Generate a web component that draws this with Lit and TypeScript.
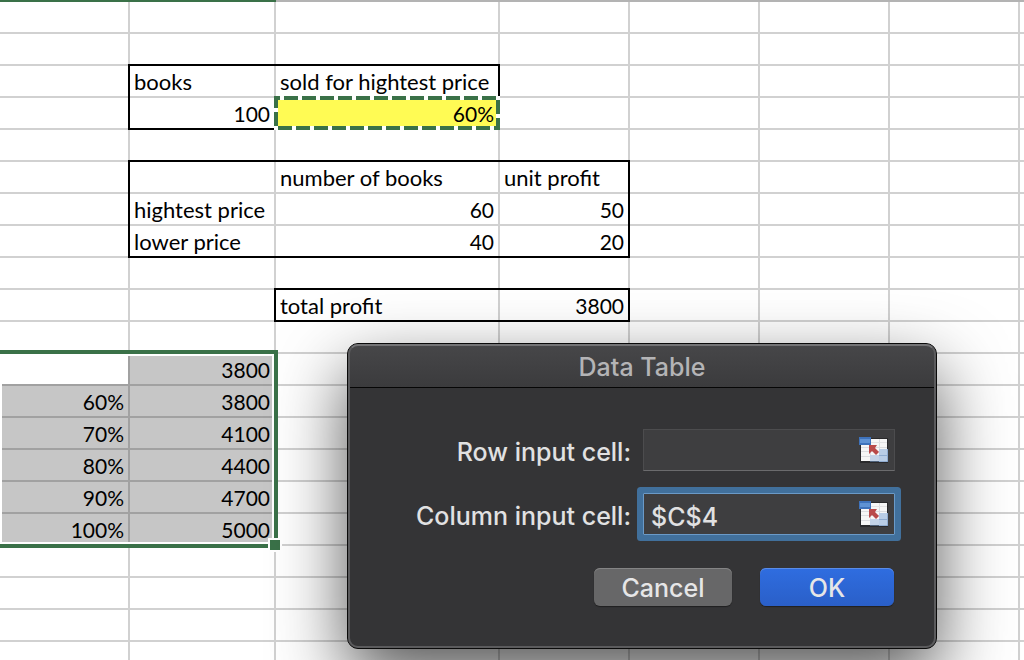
import { LitElement, html, css, svg } from "lit";
import { customElement, property } from "lit/decorators.js";
import { classMap } from "lit/directives/class-map.js";

interface Cell {
  text?: string;
  num?: boolean;
  edge?: string;
  fill?: "yellow" | "shade" | "active";
}

const COLUMNS = 8;
const ROWS = 21;

/* Keys are "row:column". Edge letters: r = right, b = bottom, c = corner. */
const CELLS: Record<string, Cell> = {
  "1:0": { edge: "c" },
  "1:1": { edge: "b" },
  "1:2": { edge: "b" },
  "2:0": { edge: "r" },
  "2:1": { text: "books" },
  "2:2": { text: "sold for hightest price", edge: "r" },
  "3:0": { edge: "r" },
  "3:1": { text: "100", num: true, edge: "b" },
  "3:2": { text: "60%", num: true, edge: "rb", fill: "yellow" },
  "4:0": { edge: "c" },
  "4:1": { edge: "b" },
  "4:2": { edge: "b" },
  "4:3": { edge: "b" },
  "5:0": { edge: "r" },
  "5:2": { text: "number of books" },
  "5:3": { text: "unit profit", edge: "r" },
  "6:0": { edge: "r" },
  "6:1": { text: "hightest price" },
  "6:2": { text: "60", num: true },
  "6:3": { text: "50", num: true, edge: "r" },
  "7:0": { edge: "r" },
  "7:1": { text: "lower price", edge: "b" },
  "7:2": { text: "40", num: true, edge: "b" },
  "7:3": { text: "20", num: true, edge: "rb" },
  "8:1": { edge: "c" },
  "8:2": { edge: "b" },
  "8:3": { edge: "b" },
  "9:1": { edge: "r" },
  "9:2": { text: "total profit", edge: "b" },
  "9:3": { text: "3800", num: true, edge: "rb" },
  "11:0": { fill: "active" },
  "11:1": { text: "3800", num: true, fill: "shade" },
  "12:0": { text: "60%", num: true, fill: "shade" },
  "12:1": { text: "3800", num: true, fill: "shade" },
  "13:0": { text: "70%", num: true, fill: "shade" },
  "13:1": { text: "4100", num: true, fill: "shade" },
  "14:0": { text: "80%", num: true, fill: "shade" },
  "14:1": { text: "4400", num: true, fill: "shade" },
  "15:0": { text: "90%", num: true, fill: "shade" },
  "15:1": { text: "4700", num: true, fill: "shade" },
  "16:0": { text: "100%", num: true, fill: "shade" },
  "16:1": { text: "5000", num: true, fill: "shade" },
};

@customElement("sheet-grid")
export class SheetGrid extends LitElement {
  static styles = css`
    :host {
      display: block;
      position: relative;
      font-family: Lato, "Open Sans", sans-serif;
      font-size: 22px;
      color: #000;
    }
    .sheet {
      width: 100%;
      table-layout: fixed;
      border-collapse: separate;
      border-spacing: 0;
      border-top: 2px solid #b3b3b3;
    }
    .col-a, .col-d { width: 130px; }
    .col-b { width: 146px; }
    .col-c { width: 224px; }
    .cell {
      --line: #d1d1d1;
      --right: var(--line);
      --bottom: var(--line);
      --corner: var(--line);
      height: 32px;
      box-sizing: border-box;
      padding: 1px 6px 1px 4px;
      line-height: 30px;
      white-space: nowrap;
      text-align: left;
      background:
        linear-gradient(var(--corner), var(--corner)) right bottom / 2px 2px no-repeat,
        linear-gradient(var(--bottom), var(--bottom)) left bottom / 100% 2px no-repeat,
        linear-gradient(var(--right), var(--right)) right top / 2px 100% no-repeat,
        var(--fill, #fff);
    }
    .cell:last-child { --right: transparent; }
    .num {
      font-size: 21px;
      text-align: right;
    }
    .edge-right { --right: #000; --corner: #000; }
    .edge-bottom { --bottom: #000; --corner: #000; }
    .edge-corner { --corner: #000; }
    .yellow { --fill: #fffb54; }
    .shade { --fill: #c6c6c6; --line: #a1a1a1; }
    .active { --line: #a1a1a1; }
    .previous {
      position: absolute;
      top: 0;
      left: 0;
      width: 276px;
      height: 2px;
      background: #3a7148;
    }
    .ants {
      position: absolute;
      top: 96px;
      left: 274px;
      display: block;
    }
    .selection {
      position: absolute;
      top: 350px;
      left: -4px;
      width: 282px;
      height: 198px;
      box-sizing: border-box;
      border: 4px solid #3a7148;
      box-shadow: inset 0 0 0 2px #fff;
    }
    .handle {
      position: absolute;
      right: -8px;
      bottom: -8px;
      width: 10px;
      height: 10px;
      border: 2px solid #fff;
      background: #3a7148;
    }
  `;

  private renderCell(row: number, col: number) {
    const cell = CELLS[`${row}:${col}`] ?? {};
    const edge = cell.edge ?? "";
    const classes = {
      cell: true,
      num: !!cell.num,
      "edge-right": edge.includes("r"),
      "edge-bottom": edge.includes("b"),
      "edge-corner": edge.includes("c"),
      yellow: cell.fill === "yellow",
      shade: cell.fill === "shade",
      active: cell.fill === "active",
    };
    return html`<td class=${classMap(classes)}>${cell.text ?? ""}</td>`;
  }

  render() {
    const rows = Array.from({ length: ROWS }, (_, r) => r);
    const cols = Array.from({ length: COLUMNS }, (_, c) => c);
    return html`
      <table class="sheet">
        <colgroup>
          <col class="col-a" /><col class="col-b" /><col class="col-c" />
          <col class="col-d" /><col class="col-d" /><col class="col-d" /><col class="col-d" />
          <col />
        </colgroup>
        <tbody>
          ${rows.map((r) => html`<tr>${cols.map((c) => this.renderCell(r, c))}</tr>`)}
        </tbody>
      </table>
      <div class="previous"></div>
      <svg class="ants" width="226" height="34" viewBox="0 0 226 34" fill="none" stroke-width="4" aria-hidden="true">
        <rect x="2" y="2" width="222" height="30" stroke="#fff" />
        <rect x="2" y="2" width="222" height="30" stroke="#3a7148" stroke-dasharray="14 4" stroke-dashoffset="10" />
      </svg>
      <div class="selection"><div class="handle"></div></div>
    `;
  }
}

const pickerIcon = svg`
  <rect x="1" y="1" width="28" height="25" fill="#29292b" />
  <rect x="2" y="2" width="26" height="22" fill="#f6f6f6" />
  <path d="M2 10.500h26M2 14.500h26M2 19.500h26M11.500 2v22M20.500 2v22" stroke="#dcdde0" fill="none" />
  <path d="M12 5.500h16" stroke="#e3e3e5" fill="none" />
  <rect x="11" y="18" width="9" height="6" fill="#c3d3e8" />
  <rect x="20" y="12" width="9" height="13" fill="#b9cde6" />
  <path d="M20 18.500h8M11 24.500h18M28.500 12v13" stroke="#6f92bd" stroke-opacity=".55" fill="none" />
  <rect x="0" y="0" width="12" height="8" fill="#3e72bb" />
  <rect x="1" y="2" width="10" height="4" fill="#5f92d3" />
  <path d="M10 8h8l-2 3 4 4-3 3-4-4-3 3z" fill="#b94a4a" />
`;

@customElement("range-field")
export class RangeField extends LitElement {
  @property() label = "";
  @property() value = "";
  @property({ type: Boolean }) current = false;

  static styles = css`
    :host {
      display: grid;
      grid-template-columns: 1fr 252px;
      column-gap: 12px;
      align-items: center;
    }
    .label {
      padding-top: 4px;
      text-align: right;
      line-height: 38px;
      white-space: nowrap;
    }
    .box {
      display: flex;
      align-items: center;
      height: 42px;
      box-sizing: border-box;
      padding-right: 5px;
      border: 1px solid #4c4c4e;
      border-bottom-color: #6b6b6d;
      background: #3e3e40;
    }
    .box.current {
      border-color: #6a9ac8;
      box-shadow: 0 0 0 6px #41709c;
      border-radius: 1px;
    }
    .input {
      flex: 1;
      min-width: 0;
      height: 100%;
      box-sizing: border-box;
      padding: 6px 8px 0 7px;
      border: 0;
      outline: 0;
      background: none;
      color: inherit;
      font: inherit;
    }
    .pick {
      width: 30px;
      height: 26px;
      padding: 0;
      border: 0;
      background: none;
    }
    .glyph { display: block; }
  `;

  render() {
    return html`
      <label class="label" for="ref">${this.label}</label>
      <div class=${classMap({ box: true, current: this.current })}>
        <input class="input" id="ref" type="text" .value=${this.value} />
        <button class="pick" type="button" aria-label="Select range">
          <svg class="glyph" width="30" height="26" viewBox="0 0 30 26">${pickerIcon}</svg>
        </button>
      </div>
    `;
  }
}

@customElement("data-table-dialog")
export class DataTableDialog extends LitElement {
  static styles = css`
    :host {
      display: block;
      box-sizing: border-box;
      position: relative;
      border: 1px solid #0a0a0a;
      border-radius: 11px;
      background: #343436;
      color: #e1e1e2;
      font-family: Inter, "Liberation Sans", sans-serif;
      font-size: 25px;
      font-weight: 500;
      box-shadow: 0 28px 70px rgba(0, 0, 0, 0.67);
    }
    :host::after {
      content: "";
      position: absolute;
      inset: 0;
      border: 2px solid #5b5b5d;
      border-top-color: #747476;
      border-radius: 10px;
      pointer-events: none;
    }
    .title {
      margin: 0;
      height: 44px;
      box-sizing: border-box;
      padding-top: 3px;
      border-bottom: 1px solid #060606;
      border-radius: 10px 10px 0 0;
      background: linear-gradient(#474749, #3b3b3d);
      color: #b4b4b6;
      font-size: 25px;
      font-weight: 500;
      line-height: 40px;
      text-align: center;
    }
    .form {
      display: grid;
      row-gap: 22px;
      padding: 41px 41px 42px;
    }
    .actions {
      display: flex;
      justify-content: flex-end;
      gap: 28px;
      padding: 11px 1px 0 0;
    }
    .button {
      width: 138px;
      height: 38px;
      padding: 2px 0 0;
      border: 0;
      border-radius: 6px;
      background: #676768;
      box-shadow: inset 0 1px #848485, 0 1px 1px rgba(0, 0, 0, 0.4);
      color: #e6e6e7;
      font: inherit;
      line-height: 36px;
    }
    .button.primary {
      width: 134px;
      background: linear-gradient(#2f6de0, #2a5fc8);
      box-shadow: inset 0 1px #5a8ce8, 0 1px 1px rgba(0, 0, 0, 0.4);
    }
  `;

  render() {
    return html`
      <h1 class="title">Data Table</h1>
      <form class="form" @submit=${(e: Event) => e.preventDefault()}>
        <range-field label="Row input cell:"></range-field>
        <range-field label="Column input cell:" value="$C$4" current></range-field>
        <div class="actions">
          <button class="button" type="button">Cancel</button>
          <button class="button primary" type="submit">OK</button>
        </div>
      </form>
    `;
  }
}

@customElement("app-root")
export class AppRoot extends LitElement {
  static styles = css`
    :host {
      display: block;
      position: relative;
      height: 100vh;
      overflow: hidden;
      background: #fff;
    }
    .dialog {
      position: absolute;
      top: 343px;
      left: 347px;
      width: 590px;
    }
  `;

  render() {
    return html`
      <sheet-grid></sheet-grid>
      <data-table-dialog class="dialog" role="dialog" aria-label="Data Table"></data-table-dialog>
    `;
  }
}
